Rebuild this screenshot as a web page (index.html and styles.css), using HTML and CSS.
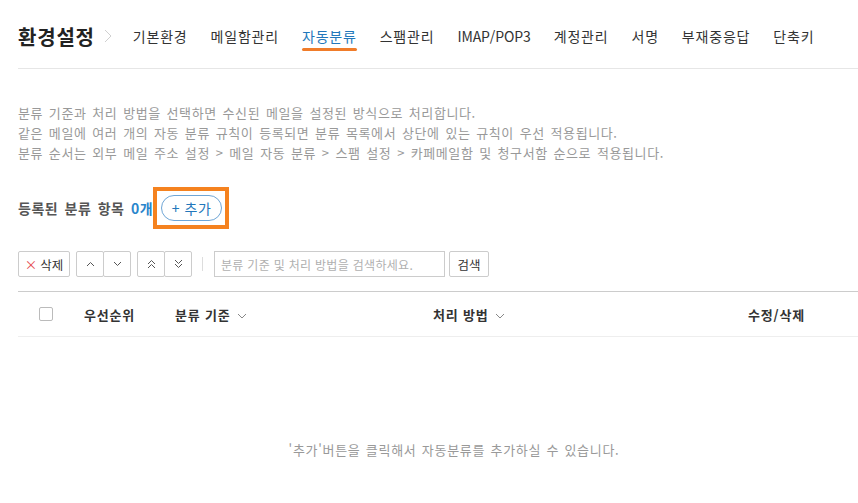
FILE: index.html
```html
<!DOCTYPE html>
<html lang="ko">
<head>
  <meta charset="UTF-8">
  <title>환경설정 - 자동분류</title>
  <link rel="stylesheet" href="styles.css">
</head>
<body>

<div class="page">

  <div class="header">
    <h1 class="title">환경설정</h1>
    <svg class="crumb" width="8" height="14" viewBox="0 0 8 14"><polyline points="1,1 7,7 1,13" fill="none" stroke="#d0d0d0" stroke-width="1"/></svg>
    <ul class="tabs">
      <li>기본환경</li>
      <li>메일함관리</li>
      <li class="active">자동분류</li>
      <li>스팸관리</li>
      <li class="latin">IMAP/POP3</li>
      <li>계정관리</li>
      <li>서명</li>
      <li>부재중응답</li>
      <li>단축키</li>
    </ul>
  </div>

  <div class="desc">
    <p>분류 기준과 처리 방법을 선택하면 수신된 메일을 설정된 방식으로 처리합니다.</p>
    <p>같은 메일에 여러 개의 자동 분류 규칙이 등록되면 분류 목록에서 상단에 있는 규칙이 우선 적용됩니다.</p>
    <p>분류 순서는 외부 메일 주소 설정 &gt; 메일 자동 분류 &gt; 스팸 설정 &gt; 카페메일함 및 청구서함 순으로 적용됩니다.</p>
  </div>

  <div class="count-row">
    <span class="count-label">등록된 분류 항목 <em>0개</em></span>
    <span class="highlight"><button class="add-btn">+ 추가</button></span>
  </div>

  <div class="toolbar">
    <button class="btn del-btn"><span class="x">×</span>삭제</button>
    <div class="btn-group">
      <button class="btn icon-btn"><svg width="9" height="6" viewBox="0 0 9 6"><polyline points="1,5 4.5,1.5 8,5" fill="none" stroke="#555" stroke-width="1"/></svg></button>
      <button class="btn icon-btn"><svg width="9" height="6" viewBox="0 0 9 6"><polyline points="1,1 4.5,4.5 8,1" fill="none" stroke="#555" stroke-width="1"/></svg></button>
    </div>
    <div class="btn-group">
      <button class="btn icon-btn"><svg width="9" height="10" viewBox="0 0 9 10"><polyline points="1,5 4.5,1.5 8,5" fill="none" stroke="#555" stroke-width="1"/><polyline points="1,9 4.5,5.5 8,9" fill="none" stroke="#555" stroke-width="1"/></svg></button>
      <button class="btn icon-btn"><svg width="9" height="10" viewBox="0 0 9 10"><polyline points="1,1 4.5,4.5 8,1" fill="none" stroke="#555" stroke-width="1"/><polyline points="1,5 4.5,8.5 8,5" fill="none" stroke="#555" stroke-width="1"/></svg></button>
    </div>
    <span class="sep"></span>
    <input class="search" type="text" placeholder="분류 기준 및 처리 방법을 검색하세요.">
    <button class="btn search-btn">검색</button>
  </div>

  <div class="table-head">
    <div class="col-check"><span class="checkbox"></span></div>
    <div>우선순위</div>
    <div>분류 기준 <svg class="sort" width="10" height="6" viewBox="0 0 10 6"><polyline points="1,1 5,5 9,1" fill="none" stroke="#888" stroke-width="1"/></svg></div>
    <div>처리 방법 <svg class="sort" width="10" height="6" viewBox="0 0 10 6"><polyline points="1,1 5,5 9,1" fill="none" stroke="#888" stroke-width="1"/></svg></div>
    <div>수정/삭제</div>
  </div>

  <p class="empty">'추가'버튼을 클릭해서 자동분류를 추가하실 수 있습니다.</p>

</div>

</body>
</html>
```

FILE: styles.css
```css
html, body { margin: 0; overflow: hidden; }
body { font-family: "Noto Sans CJK KR", "Noto Sans", sans-serif; background: #fff; color: #333; }
.page { width: 872px; padding-left: 18px; }

/* header */
.header { display: flex; align-items: center; height: 64px; padding-top: 4px; border-bottom: 1px solid #e6e6e6; }
.title { margin: 0; font-size: 20px; font-weight: bold; color: #222; letter-spacing: 0.8px; }
.crumb { margin: 0 21px 0 9px; }
.tabs { display: flex; gap: 23px; list-style: none; margin: 0; padding: 0; font-size: 14px; letter-spacing: 0.8px; color: #333; }
.tabs li { position: relative; line-height: 20px; }
.tabs .latin { letter-spacing: -0.1px; }
.tabs .active { color: #2277bb; }
.tabs .active::after { content: ""; position: absolute; left: 0; right: 0; bottom: -5px; height: 3px; border-radius: 2px; background: #f07c2a; }

/* description */
.desc { margin-top: 34px; font-size: 13px; color: #999; line-height: 20px; letter-spacing: 0.6px; word-spacing: 1.5px; }
.desc p { margin: 0; }

/* count */
.count-row { display: flex; align-items: center; margin-top: 24px; }
.count-label { font-size: 14px; font-weight: bold; color: #555; letter-spacing: 0.5px; word-spacing: 2px; }
.count-label em { font-style: normal; color: #2a86cc; }
.highlight { display: inline-flex; border: 4px solid #f5821f; padding: 4px 3px 4px 4px; }
.add-btn { height: 26px; width: 61px; border: 1px solid #6fa6d6; border-radius: 13px; background: #fff; color: #2277bb; font-family: inherit; font-size: 14px; letter-spacing: 0.5px; padding: 0; }

/* toolbar */
.toolbar { display: flex; align-items: center; margin-top: 22px; gap: 6px; }
.btn { height: 26px; border: 1px solid #ccc; border-radius: 2px; background: #fff; font-family: inherit; font-size: 12px; color: #333; padding: 0 8px; }
.del-btn { width: 52px; padding: 0; font-size: 12.5px; }
.del-btn .x { color: #e5484d; margin-right: 3px; }
.btn-group { display: flex; }
.btn-group .icon-btn { width: 28px; padding: 0; display: flex; align-items: center; justify-content: center; }
.btn-group .icon-btn + .icon-btn { margin-left: -1px; }
.sep { width: 1px; height: 14px; background: #ddd; margin: 0 5px 0 4px; }
.search { width: 231px; height: 26px; box-sizing: border-box; border: 1px solid #ccc; padding: 0 6px; font-family: inherit; font-size: 12px; letter-spacing: 0.3px; }
.search::placeholder { color: #b0b0b0; }
.search-btn { width: 40px; padding: 0; margin-left: -2px; font-size: 12.5px; }

/* table */
.table-head { display: grid; grid-template-columns: 66px 91px 258px 315px 1fr; align-items: center; height: 44px; margin-top: 14px; border-top: 1px solid #ccc; border-bottom: 1px solid #eee; font-size: 13px; font-weight: bold; color: #333; letter-spacing: 0.8px; }
.col-check { padding-left: 21px; display: flex; }
.checkbox { width: 12px; height: 12px; border: 1px solid #bbb; border-radius: 2px; }
.sort { margin-left: 2px; vertical-align: middle; }

.empty { margin: 103px 0 0; text-align: center; font-size: 13px; line-height: 20px; color: #999; letter-spacing: 0.7px; word-spacing: 1px; }
```
